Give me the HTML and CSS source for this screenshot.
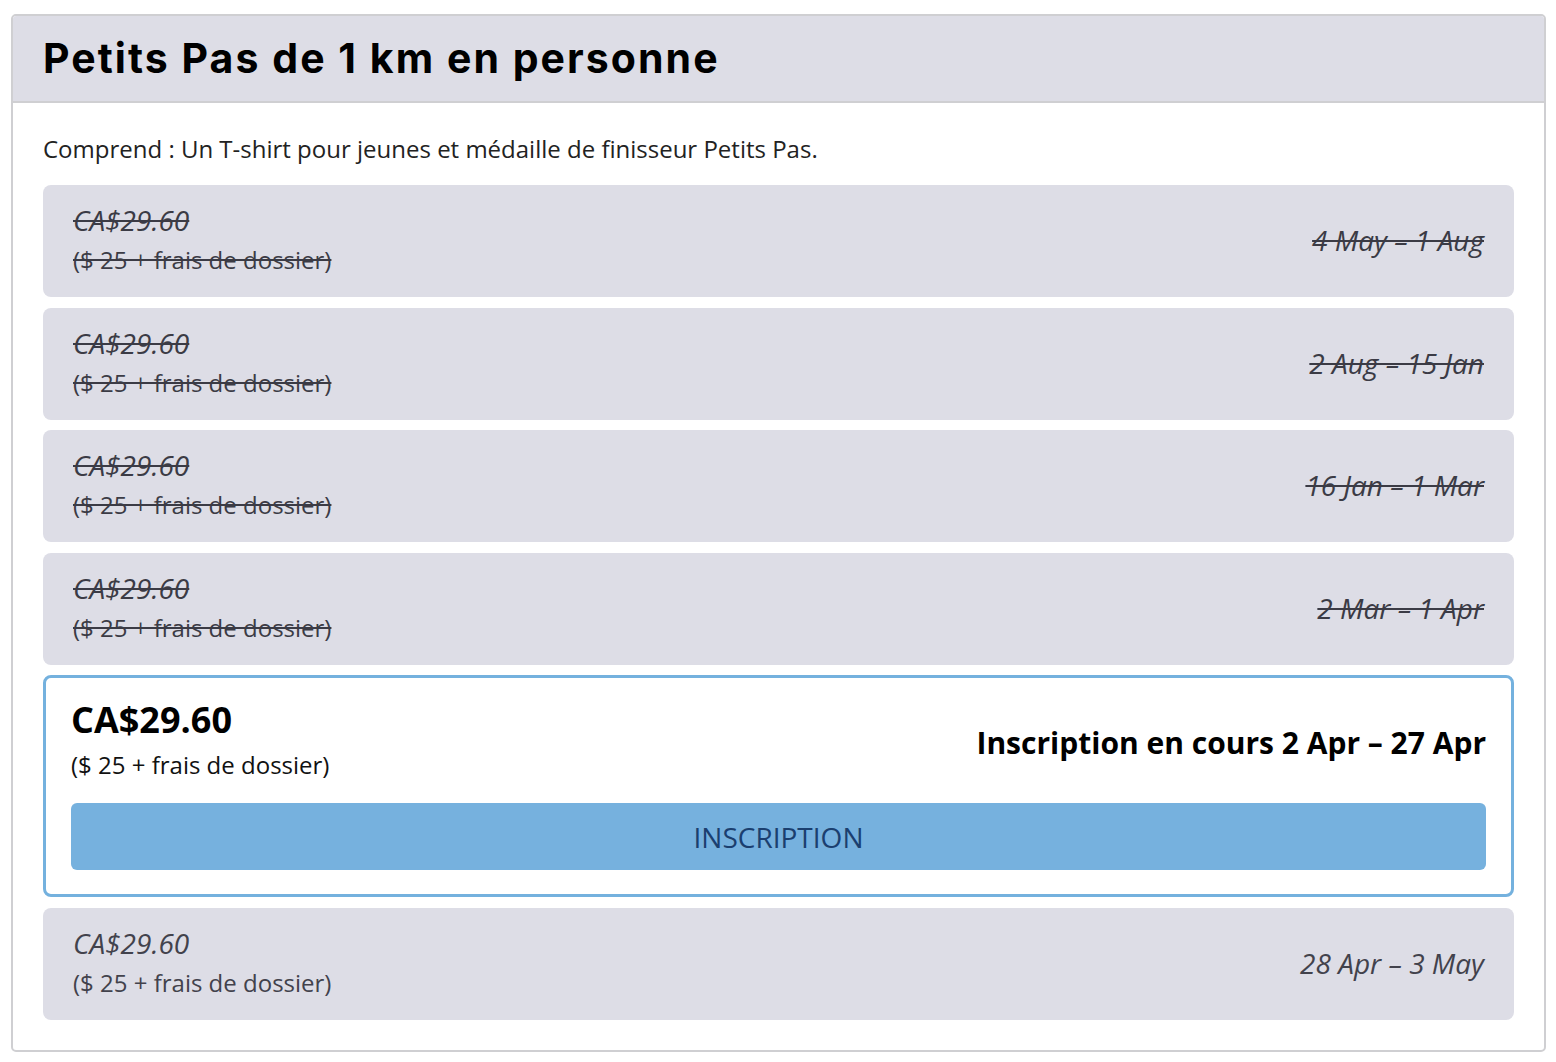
FILE: index.html
```html
<!DOCTYPE html>
<html lang="fr">
<head>
<meta charset="utf-8">
<title>Petits Pas de 1 km en personne</title>
<link rel="stylesheet" href="styles.css">
</head>
<body>
<section class="card">
  <header class="card-header">
    <h1 class="title">Petits Pas de 1 km en personne</h1>
  </header>
  <div class="card-body">
    <p class="desc">Comprend : Un T-shirt pour jeunes et médaille de finisseur Petits Pas.</p>
    <div class="rows">
      <div class="row past">
        <div class="price-block">
          <div class="price">CA$29.60</div>
          <div class="sub">($ 25 + frais de dossier)</div>
        </div>
        <div class="dates">4 May – 1 Aug</div>
      </div>
      <div class="row past">
        <div class="price-block">
          <div class="price">CA$29.60</div>
          <div class="sub">($ 25 + frais de dossier)</div>
        </div>
        <div class="dates">2 Aug – 15 Jan</div>
      </div>
      <div class="row past">
        <div class="price-block">
          <div class="price">CA$29.60</div>
          <div class="sub">($ 25 + frais de dossier)</div>
        </div>
        <div class="dates">16 Jan – 1 Mar</div>
      </div>
      <div class="row past">
        <div class="price-block">
          <div class="price">CA$29.60</div>
          <div class="sub">($ 25 + frais de dossier)</div>
        </div>
        <div class="dates">2 Mar – 1 Apr</div>
      </div>
      <div class="row active">
        <div class="active-top">
          <div class="price-block">
            <div class="price">CA$29.60</div>
            <div class="sub">($ 25 + frais de dossier)</div>
          </div>
          <div class="dates">Inscription en cours 2 Apr – 27 Apr</div>
        </div>
        <button class="btn" type="button">INSCRIPTION</button>
      </div>
      <div class="row future">
        <div class="price-block">
          <div class="price">CA$29.60</div>
          <div class="sub">($ 25 + frais de dossier)</div>
        </div>
        <div class="dates">28 Apr – 3 May</div>
      </div>
    </div>
  </div>
</section>
</body>
</html>
```

FILE: styles.css
```css
* { box-sizing: border-box; }

html, body {
  margin: 0;
  background: #ffffff;
}

body {
  padding: 14px 10px 0 11px;
  font-family: "Open Sans", "Noto Sans", sans-serif;
  color: #1a1a1a;
}

.card {
  border: 2px solid #cfcfd2;
  border-radius: 5px;
  overflow: hidden;
  background: #fff;
}

.card-header {
  background: #dddde6;
  border-bottom: 2px solid #cfcfd2;
  height: 87px;
  display: flex;
  align-items: center;
  padding: 0 30px;
}

.title {
  margin: 0;
  font-family: "Inter", "Roboto", sans-serif;
  font-weight: 700;
  font-size: 41px;
  letter-spacing: 2.05px;
  color: #000;
  line-height: 1;
}

.card-body {
  padding: 29px 30px 30px;
}

.desc {
  margin: 0 0 19px;
  font-size: 24px;
  line-height: 34px;
  color: #222;
}

.rows {
  display: flex;
  flex-direction: column;
  gap: 10.5px;
}

.row {
  background: #dddde6;
  border-radius: 8px;
  padding: 17px 30px 19px;
  display: flex;
  justify-content: space-between;
  align-items: center;
  color: #3b3b45;
}

.price {
  font-style: italic;
  font-size: 28px;
  line-height: 36px;
}

.sub {
  font-size: 24px;
  line-height: 36px;
  margin-top: 4px;
}

.dates {
  font-style: italic;
  font-size: 28px;
  line-height: 36px;
}

.past .price,
.past .sub,
.past .dates {
  text-decoration: line-through;
  text-decoration-thickness: 2px;
}

.active {
  background: #ffffff;
  border: 3px solid #74b1de;
  padding: 22px 25px 24px;
  display: flex;
  flex-direction: column;
  align-items: stretch;
  color: #000;
}

.active-top {
  display: flex;
  justify-content: space-between;
  align-items: center;
}

.active .price {
  font-style: normal;
  font-weight: 700;
  font-size: 36px;
  line-height: 40px;
}

.active .sub {
  margin-top: 8px;
  line-height: 34px;
  color: #111;
}

.active .dates {
  font-style: normal;
  font-weight: 700;
  font-size: 30px;
  line-height: 38px;
  padding-top: 4px;
}

.btn {
  margin-top: 21px;
  height: 67px;
  width: 100%;
  border: 0;
  border-radius: 6px;
  background: #76b1de;
  color: #1b3f6f;
  font-family: "Open Sans", "Noto Sans", sans-serif;
  font-size: 28px;
  cursor: pointer;
}

.future {
  color: #42424c;
}
```
